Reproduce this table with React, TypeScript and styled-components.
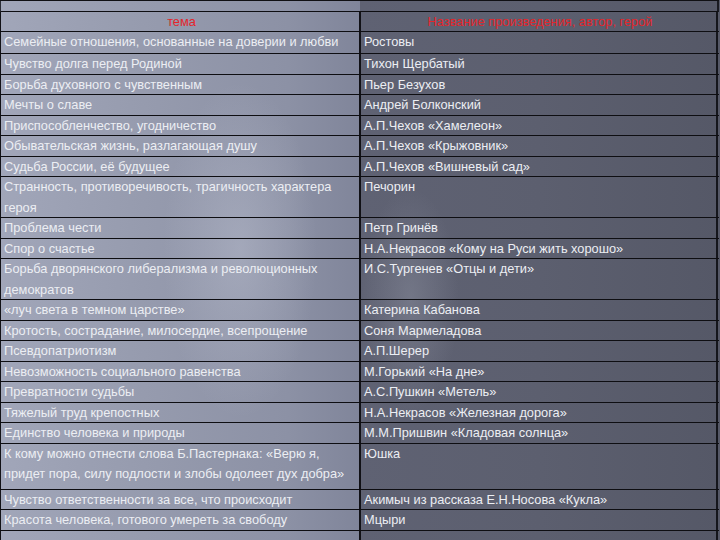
import React from "react";
import styled, { createGlobalStyle } from "styled-components";

const Global = createGlobalStyle`
  html, body { margin: 0; padding: 0; }
  body {
    width: 720px;
    height: 540px;
    overflow: hidden;
    background: #5a5d6d;
    font-family: "Liberation Sans", Arial, sans-serif;
  }
`;

const Page = styled.div`
  width: 720px;
  height: 540px;
  overflow: hidden;
  background:
    radial-gradient(ellipse 110px 240px at 240px 250px, rgba(210, 214, 228, 0.3), transparent 70%),
    radial-gradient(ellipse 70px 160px at 410px 300px, rgba(190, 195, 210, 0.22), transparent 70%),
    linear-gradient(90deg, #a1a6b9 0%, #969bae 20%, #8c91a5 40%, #80859a 50%, #5f6273 50%, #5c5f6f 75%, #555867 100%);
`;

const Table = styled.div`
  width: 719px;
  display: flex;
  flex-direction: column;
  border-top: 1px solid #101014;
`;

const Row = styled.div<{ $h: number }>`
  display: grid;
  grid-template-columns: 359px 359px;
  height: ${(p) => p.$h}px;
  box-sizing: border-box;
  border-bottom: 1.5px solid #0e0e12;
  flex: none;
`;

const Blank = styled.div<{ $h: number }>`
  height: ${(p) => p.$h}px;
  box-sizing: border-box;
  border-left: 1.5px solid #2a2c35;
  border-right: 2px solid #1a1b22;
  border-bottom: 1.5px solid #0e0e12;
  flex: none;
`;

const Cell = styled.div<{ $right?: boolean; $head?: boolean }>`
  box-sizing: border-box;
  border-left: ${(p) => (p.$right ? "2px" : "1.5px")} solid #111116;
  border-right: ${(p) => (p.$right ? "2px solid #15161c" : "none")};
  padding: 0 0 0 3px;
  color: ${(p) => (p.$head ? "#e3262c" : "#eceef3")};
  text-align: ${(p) => (p.$head ? "center" : "left")};
  font-size: 12.8px;
  line-height: 20.5px;
  white-space: pre-line;
  overflow: hidden;
`;

const data: [string, string, number][] = [
  ["Семейные отношения, основанные на доверии и любви", "Ростовы", 22.5],
  ["Чувство долга перед Родиной", "Тихон Щербатый", 20.5],
  ["Борьба духовного с чувственным", "Пьер Безухов", 20.5],
  ["Мечты о славе", "Андрей Болконский", 20.5],
  ["Приспособленчество, угодничество", "А.П.Чехов «Хамелеон»", 20.5],
  ["Обывательская жизнь, разлагающая душу", "А.П.Чехов «Крыжовник»", 20.5],
  ["Судьба России, её будущее", "А.П.Чехов «Вишневый сад»", 20.5],
  ["Странность, противоречивость, трагичность характера\nгероя", "Печорин", 41],
  ["Проблема чести", "Петр Гринёв", 20.5],
  ["Спор о счастье", "Н.А.Некрасов «Кому на Руси жить хорошо»", 20.5],
  ["Борьба дворянского либерализма и революционных\nдемократов", "И.С.Тургенев «Отцы и дети»", 41],
  ["«луч света в темном царстве»", "Катерина Кабанова", 20.5],
  ["Кротость, сострадание, милосердие, всепрощение", "Соня Мармеладова", 20.5],
  ["Псевдопатриотизм", "А.П.Шерер", 20.5],
  ["Невозможность социального равенства", "М.Горький «На дне»", 20.5],
  ["Превратности судьбы", "А.С.Пушкин «Метель»", 20.5],
  ["Тяжелый труд крепостных", "Н.А.Некрасов «Железная дорога»", 20.5],
  ["Единство человека и природы", "М.М.Пришвин «Кладовая солнца»", 20.5],
  ["К кому можно отнести слова Б.Пастернака: «Верю я,\nпридет пора, силу подлости и злобы одолеет дух добра»", "Юшка", 46],
  ["Чувство ответственности за все, что происходит", "Акимыч из рассказа Е.Н.Носова «Кукла»", 20.5],
  ["Красота человека, готового умереть за свободу", "Мцыри", 20.5],
];

export default function App() {
  return (
    <>
      <Global />
      <Page>
        <Table>
          <Blank $h={10.5} />
          <Row $h={20}>
            <Cell $head>тема</Cell>
            <Cell $head $right>Название произведения, автор, герой</Cell>
          </Row>
          {data.map(([a, b, h], i) => (
            <Row key={i} $h={h}>
              <Cell>{a}</Cell>
              <Cell $right>{b}</Cell>
            </Row>
          ))}
          <Row $h={20.5}>
            <Cell />
            <Cell $right />
          </Row>
        </Table>
      </Page>
    </>
  );
}
